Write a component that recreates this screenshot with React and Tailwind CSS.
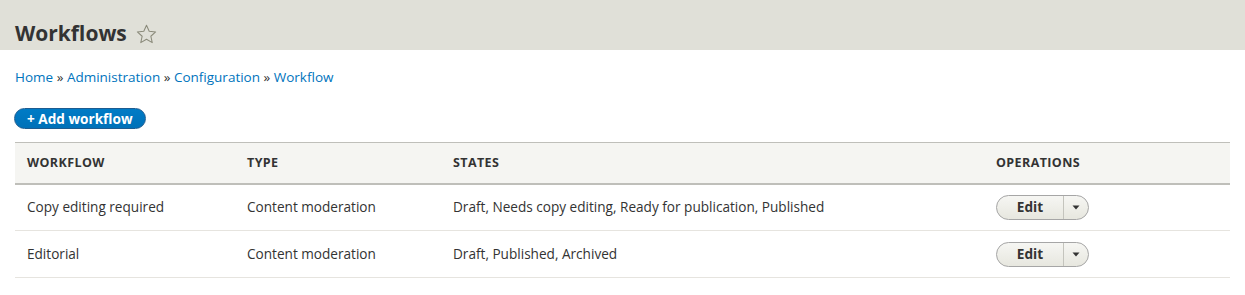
import React from 'react';

const rows = [
  { name: 'Copy editing required', type: 'Content moderation', states: 'Draft, Needs copy editing, Ready for publication, Published' },
  { name: 'Editorial', type: 'Content moderation', states: 'Draft, Published, Archived' },
];

const Star = () => (
  <svg width="21" height="20" viewBox="0 0 24 23" className="ml-[9px] mt-[2px]">
    <path
      d="M12 1.5l3.1 6.8 7.4.8-5.5 5 1.6 7.3L12 17.6l-6.6 3.8 1.6-7.3-5.5-5 7.4-.8z"
      fill="none"
      stroke="#8a8a7a"
      strokeWidth="1.2"
      strokeLinejoin="round"
    />
  </svg>
);

export default function App() {
  return (
    <div className="w-[1245px] h-[295px] bg-white text-[#333] font-['Open_Sans',sans-serif]">
      <div className="h-[50px] bg-[#e0e0d8] flex items-center px-[15px] pt-[16px]">
        <h1 className="text-[21px] font-bold leading-none text-[#333]">Workflows</h1>
        <Star />
      </div>

      <nav className="px-[15px] pt-[18px] text-[13.5px] text-[#0074bd] leading-[18px]">
        <a>Home</a> <span className="text-[#333]">»</span> <a>Administration</a>{' '}
        <span className="text-[#333]">»</span> <a>Configuration</a>{' '}
        <span className="text-[#333]">»</span> <a>Workflow</a>
      </nav>

      <div className="px-[14px] pt-[22px]">
        <button className="h-[21px] px-[12px] rounded-full bg-gradient-to-b from-[#007bc6] to-[#0071b8] border border-[#1e5c90] text-white text-[13.6px] font-bold leading-none flex items-center">
          + Add workflow
        </button>
      </div>

      <table className="ml-[15px] mt-[13px] w-[1215px] border-collapse text-[13.6px] table-fixed">
        <thead>
          <tr className="bg-[#f5f5f2] border-t border-[#bfbfba] border-b-2 border-b-[#bfbfba]">
            <th className="h-[41px] pl-[12px] pt-[1px] text-left text-[12.5px] tracking-[0.4px] font-bold uppercase w-[220px]">Workflow</th>
            <th className="pl-[12px] pt-[1px] text-left text-[12.5px] tracking-[0.4px] font-bold uppercase w-[206px]">Type</th>
            <th className="pl-[12px] pt-[1px] text-left text-[12.5px] tracking-[0.4px] font-bold uppercase w-[543px]">States</th>
            <th className="pl-[12px] pt-[1px] text-left text-[12.5px] tracking-[0.4px] font-bold uppercase">Operations</th>
          </tr>
        </thead>
        <tbody>
          {rows.map((r) => (
            <tr key={r.name} className="border-b border-[#e6e4df]">
              <td className="h-[47px] pl-[12px]">{r.name}</td>
              <td className="pl-[12px]">{r.type}</td>
              <td className="pl-[12px]">{r.states}</td>
              <td className="pl-[12px]">
                <div className="inline-flex align-middle h-[25px] rounded-full border border-[#a6a6a6] bg-gradient-to-b from-[#f6f6f3] to-[#e7e7df] overflow-hidden">
                  <span className="w-[66px] flex items-center justify-center font-bold text-[13.6px] text-[#333]">Edit</span>
                  <span className="w-[25px] border-l border-[#c4c4bd] flex items-center justify-center">
                    <svg width="8" height="5" viewBox="0 0 8 5">
                      <path d="M0.5 0.5h7L4 4.5z" fill="#333" />
                    </svg>
                  </span>
                </div>
              </td>
            </tr>
          ))}
        </tbody>
      </table>
    </div>
  );
}
